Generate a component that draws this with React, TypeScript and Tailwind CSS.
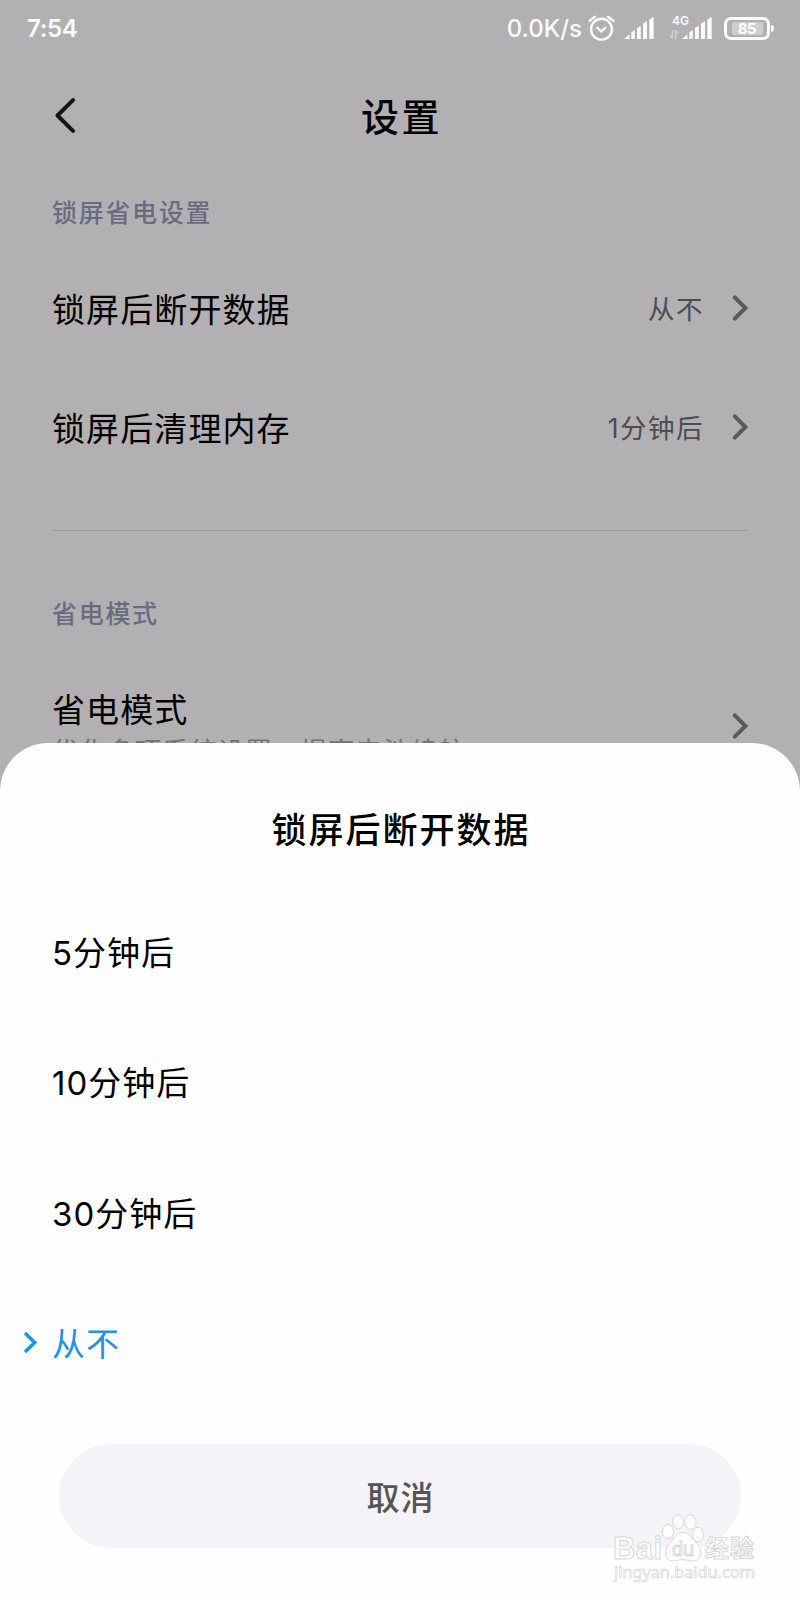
import { useState } from 'react';

type Row = {
  title: string;
  value: string;
};

const rows: Row[] = [
  { title: '锁屏后断开数据', value: '从不' },
  { title: '锁屏后清理内存', value: '1分钟后' },
];

const options = ['5分钟后', '10分钟后', '30分钟后', '从不'];

function Chevron() {
  return (
    <svg width="16" height="26" viewBox="0 0 16 26" fill="none" className="shrink-0">
      <path d="M2.8 2.4 L13.4 13 L2.8 23.6" stroke="#5b5a5d" strokeWidth="4" strokeLinecap="round" />
    </svg>
  );
}

function Signal() {
  return (
    <svg width="30" height="22" viewBox="0 0 30 22" fill="#fbfafc">
      <path d="M0 22 L5.5 17.2 V22 Z" />
      <path d="M7.3 15.6 L10.8 13 V22 H7.3 Z" />
      <path d="M13 11 L16.8 8.7 V22 H13 Z" />
      <path d="M19 6.8 L23 4 V22 H19 Z" />
      <path d="M25.3 2.4 L29.7 0 V22 H25.3 Z" />
    </svg>
  );
}

function StatusBar() {
  return (
    <div className="flex h-14 items-center pl-[27px] pr-[26px] text-[24px] font-semibold leading-none text-[#fbfafc]">
      <span className="mt-[2px] tracking-[-0.3px]">7:54</span>
      <span className="ml-auto mt-[2px] font-medium">0.0K/s</span>
      <svg width="27" height="26" viewBox="0 0 27 26" fill="none" stroke="#fbfafc" strokeWidth="2.4" strokeLinecap="round" className="ml-[6px]">
        <circle cx="13.5" cy="14.2" r="10.4" />
        <path d="M1.6 5.8 L7 1.8 M20 1.8 L25.4 5.8" />
        <path d="M9.3 12.6 L13.2 16.4 L17.6 12.6" strokeWidth="2.2" />
      </svg>
      <div className="ml-[9px]">
        <Signal />
      </div>
      <div className="relative ml-[28px]">
        <Signal />
        <span className="absolute -left-[10px] -top-[2px] text-[12px] font-semibold leading-none">4G</span>
        <svg width="10" height="9" viewBox="0 0 10 9" fill="none" stroke="#d5d3d6" strokeWidth="1.3" className="absolute -left-[13px] top-[13px]">
          <path d="M3.4 0 V8 L0.6 5.4 M6.6 9 V1 L9.4 3.6" />
        </svg>
      </div>
      <div className="ml-[12px] flex h-[23px] w-[46px] items-center justify-center rounded-[7px] border-3 border-[#fbfafc]">
        <div className="flex h-[13px] w-[31px] items-center justify-center rounded-[2px] bg-[#cfcdd0]">
          <span className="text-[15px] font-bold leading-none tracking-[-0.5px]">85</span>
        </div>
      </div>
      <div className="ml-[1px] h-[7px] w-[3px] rounded-r-sm bg-[#fbfafc]" />
    </div>
  );
}

function Watermark() {
  return (
    <svg width="150" height="72" viewBox="0 0 150 72" className="absolute left-[610px] top-[768px]" fill="#ffffff" fillOpacity="0.85" stroke="#d8d7da" strokeWidth="1">
      <text x="3" y="48" fontFamily="Liberation Sans" fontWeight="700" fontSize="31" textLength="49">Bai</text>
      <ellipse cx="58" cy="20.7" rx="5.5" ry="7.2" />
      <ellipse cx="68" cy="10.7" rx="5.5" ry="7.2" />
      <ellipse cx="80.5" cy="11.2" rx="5.5" ry="7.2" />
      <ellipse cx="88" cy="23.5" rx="5.5" ry="7.2" />
      <path d="M73 21.5 C80 21.5 82 28 87 33 C94 40 91 50 83 50 C79 50 77 48.5 73 48.5 C69 48.5 67 50 63 50 C55 50 53 40 59 33 C64 28 66 21.5 73 21.5 Z" />
      <text x="62" y="45" fontFamily="Liberation Sans" fontSize="20" textLength="22">du</text>
      <text x="95" y="46" fontFamily="Noto Sans CJK SC" fontWeight="700" fontSize="24" textLength="49">经验</text>
      <text x="4" y="66.5" fontFamily="Noto Sans" fontSize="16.5" strokeWidth="0.7" textLength="141">jingyan.baidu.com</text>
    </svg>
  );
}

export default function App() {
  const [selected, setSelected] = useState('从不');

  return (
    <div className="relative h-[1600px] w-[800px] overflow-hidden bg-[#b2b0b3] font-['Inter','Noto_Sans_CJK_SC',sans-serif] text-black">
      <StatusBar />

      <header className="flex h-[120px] items-center px-[54px]">
        <button className="w-[60px]">
          <svg width="22" height="36" viewBox="0 0 22 36" fill="none">
            <path d="M19 2.1 L3.5 17.5 L19 32.9" stroke="#151417" strokeWidth="4" strokeLinecap="round" strokeLinejoin="round" />
          </svg>
        </button>
        <h1 className="flex-1 pl-[3px] pt-[2px] text-center text-[38px] font-medium leading-[56px] tracking-[2.5px]">设置</h1>
        <div className="w-[60px]" />
      </header>

      <section className="px-[52px]">
        <h2 className="h-[74px] pt-[17px] text-[25px] font-medium leading-[40px] tracking-[1.7px] text-[#696c80]">锁屏省电设置</h2>
        {rows.map((row) => (
          <div key={row.title} className="flex h-[119px] items-center pb-[3px]">
            <span className="pt-[4px] text-[33px] leading-[48px] tracking-[1.1px]">{row.title}</span>
            <span className="ml-auto mr-[28px] pt-px text-[26.5px] leading-[40px] tracking-[1.5px] text-[#4d4c4f]">{row.value}</span>
            <Chevron />
          </div>
        ))}
        <div className="mt-[42px] h-px bg-[#9d9b9e]" />
      </section>

      <section className="px-[52px] pt-[63px]">
        <h2 className="text-[25px] font-medium leading-[40px] tracking-[1.7px] text-[#696c80]">省电模式</h2>
        <div className="mt-[40px] flex h-[104px] items-center">
          <div>
            <p className="pt-[2px] text-[33px] leading-[48px] tracking-[1.1px]">省电模式</p>
            <p className="text-[26.5px] leading-[34px] tracking-[1.1px] text-[#737275]">优化多项系统设置，提高电池续航</p>
          </div>
          <div className="ml-auto">
            <Chevron />
          </div>
        </div>
      </section>

      {/* bottom sheet */}
      <div className="absolute inset-x-0 bottom-0 h-[857px] rounded-t-[48px] bg-[#fefefe]">
        <h3 className="pt-[61px] pl-[2px] text-center text-[35px] font-medium leading-[52px] tracking-[2px]">锁屏后断开数据</h3>
        <ul className="mt-[31px]">
          {options.map((option) => (
            <li
              key={option}
              onClick={() => setSelected(option)}
              className={`flex h-[130.4px] items-center text-[33px] tracking-[1px] ${option === selected ? 'text-[#1d94e6]' : ''}`}
            >
              <div className="flex w-[52px] justify-end pr-[14px]">
                {option === selected && (
                  <svg width="15" height="22" viewBox="0 0 15 22" fill="none">
                    <path d="M2 1 L11.8 10.5 L2 20" stroke="#1d94e6" strokeWidth="3.4" />
                  </svg>
                )}
              </div>
              <span className="pt-[3px]">{option}</span>
            </li>
          ))}
        </ul>
        <button className="mx-auto mt-[35px] flex h-[104px] w-[682px] items-center justify-center rounded-full bg-[#f5f3f7] pt-[6px] pl-px text-[33px] font-medium tracking-[1px] text-[#555457]">
          取消
        </button>
        <Watermark />
      </div>
    </div>
  );
}
